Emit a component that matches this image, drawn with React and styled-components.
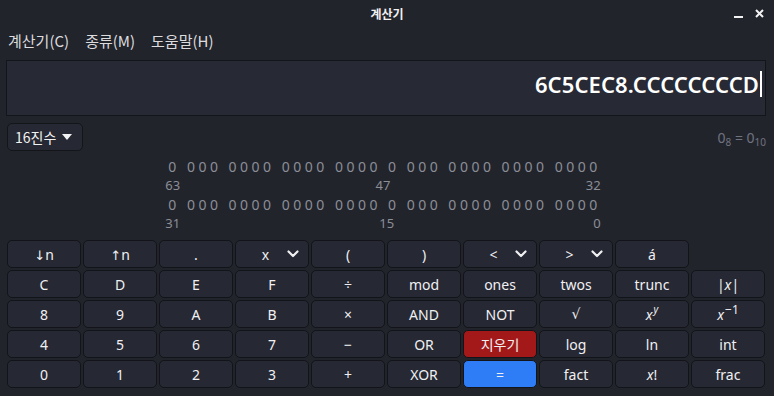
import React from 'react'
import styled, { createGlobalStyle } from 'styled-components'

const GlobalStyle = createGlobalStyle`
  html, body {
    margin: 0;
    padding: 0;
    background: #22242c;
  }
  body {
    font-family: "Noto Sans", "Noto Sans CJK KR", sans-serif;
    color: #e4e4e6;
  }
`

const Window = styled.div`
  width: 774px;
  height: 396px;
  background: #22242c;
  display: flex;
  flex-direction: column;
  overflow: hidden;
`

const TitleBar = styled.div`
  height: 27px;
  display: grid;
  grid-template-columns: 1fr auto 1fr;
  align-items: center;
`

const Title = styled.div`
  grid-column: 2;
  font-family: "Noto Sans CJK KR", sans-serif;
  font-size: 12px;
  font-weight: 700;
  color: #f0f0f0;
`

const Controls = styled.div`
  justify-self: end;
  display: flex;
  align-items: center;
  gap: 12px;
  padding-right: 10px;
`

const MenuBar = styled.div`
  height: 28px;
  display: flex;
  align-items: center;
  gap: 16px;
  padding-left: 8px;
`

const MenuItem = styled.span`
  font-family: "Noto Sans CJK KR", sans-serif;
  font-size: 15px;
  color: #dcdcdf;
  margin-top: -2px;
`

const Body = styled.div`
  padding: 5px 8px 0 6px;
  display: flex;
  flex-direction: column;
`

const Display = styled.div`
  background: #272935;
  border: 1px solid #14151a;
  display: flex;
  align-items: center;
  justify-content: flex-end;
  padding-right: 3px;
  padding-bottom: 9px;
  box-sizing: content-box;
  height: 45px;
`

const DisplayText = styled.span`
  font-size: 22px;
  font-weight: 600;
  color: #ffffff;
  letter-spacing: 0.1px;
`

const Cursor = styled.span`
  width: 2px;
  height: 26px;
  background: #ffffff;
  margin-left: 1px;
`

const BaseRow = styled.div`
  margin-top: 7px;
  margin-left: 1px;
  display: flex;
  align-items: center;
  justify-content: space-between;
`

const BaseSelect = styled.div`
  height: 26px;
  border: 1px solid #141519;
  border-radius: 5px;
  background: #262833;
  display: flex;
  align-items: center;
  gap: 6px;
  padding-left: 7px;
  box-sizing: content-box;
  font-family: "Noto Sans CJK KR", sans-serif;
  font-size: 14px;
  color: #f2f2f2;
  width: 67px;
`

const Conversion = styled.span`
  font-size: 14px;
  color: #707380;
  margin-top: 2px;
  sub {
    font-size: 10px;
    vertical-align: -3px;
  }
`

const Bits = styled.div`
  margin-top: 6px;
  margin-right: 6px;
  align-self: center;
  display: flex;
  flex-direction: column;
  color: #8b8e97;
  font-size: 14px;
  line-height: 19px;
`

const BitLine = styled.div`
  white-space: pre;
  letter-spacing: 3.5px;
  padding-left: 3px;
`

const BitLabels = styled.div`
  display: flex;
  justify-content: space-between;
  font-size: 13px;
`

const Keypad = styled.div`
  margin-top: 7px;
  margin-left: 1px;
  display: grid;
  grid-template-columns: repeat(10, 74px);
  grid-auto-rows: 28px;
  gap: 2px;
`

const Key = styled.button`
  box-sizing: border-box;
  border: 1px solid #131419;
  border-radius: 5px;
  background: ${p => (p.$tone === 'danger' ? '#a3191a' : p.$tone === 'accent' ? '#2e7cf6' : '#262833')};
  color: #f0f0f2;
  font-family: "Noto Sans", "Noto Sans CJK KR", sans-serif;
  font-size: 14px;
  display: flex;
  align-items: center;
  justify-content: center;
  padding: 0;
  i {
    font-style: italic;
  }
`

const Sup = styled.span`
  position: relative;
  top: ${p => p.$top || -5}px;
  font-size: ${p => p.$size || 10}px;
  margin-left: 1px;
`

const Arrow = styled.span`
  font-family: "DejaVu Sans", sans-serif;
  font-size: 13px;
  position: relative;
  top: 1px;
`

const Root = styled.span`
  font-family: "DejaVu Sans", sans-serif;
  font-size: 14px;
`

const KeyLabel = styled.span`
  flex: 1;
  text-align: center;
  padding-left: 8px;
`

const Chevron = () => (
  <svg width="12" height="8" viewBox="0 0 12 8" style={{ marginRight: 9 }}>
    <polyline points="1.5,1.5 6,6 10.5,1.5" fill="none" stroke="#f0f0f2" strokeWidth="2.2" strokeLinecap="round" strokeLinejoin="round" />
  </svg>
)

const MenuKey = ({ children }) => (
  <Key>
    <KeyLabel>{children}</KeyLabel>
    <Chevron />
  </Key>
)

const Spacer = styled.div``

const bits = '0 000 0000 0000 0000 0 000 0000 0000 0000'

export default function App() {
  return (
    <Window>
      <GlobalStyle />
      <TitleBar>
        <Title>계산기</Title>
        <Controls>
          <svg width="9" height="10" viewBox="0 0 9 10">
            <rect x="0" y="7" width="9" height="2" fill="#f2f2f2" />
          </svg>
          <svg width="9" height="9" viewBox="0 0 9 9">
            <path d="M1 1 L8 8 M8 1 L1 8" stroke="#f2f2f2" strokeWidth="2" />
          </svg>
        </Controls>
      </TitleBar>
      <MenuBar>
        <MenuItem>계산기(C)</MenuItem>
        <MenuItem>종류(M)</MenuItem>
        <MenuItem>도움말(H)</MenuItem>
      </MenuBar>
      <Body>
        <Display>
          <DisplayText>6C5CEC8.CCCCCCCCD</DisplayText>
          <Cursor />
        </Display>
        <BaseRow>
          <BaseSelect>
            16진수
            <svg width="10" height="6" viewBox="0 0 10 6">
              <polygon points="0,0 10,0 5,6" fill="#f2f2f2" />
            </svg>
          </BaseSelect>
          <Conversion>
            0<sub>8</sub> = 0<sub>10</sub>
          </Conversion>
        </BaseRow>
        <Bits>
          <BitLine>{bits}</BitLine>
          <BitLabels>
            <span>63</span>
            <span>47</span>
            <span>32</span>
          </BitLabels>
          <BitLine>{bits}</BitLine>
          <BitLabels>
            <span>31</span>
            <span>15</span>
            <span>0</span>
          </BitLabels>
        </Bits>
        <Keypad>
          <Key><Arrow>↓</Arrow>n</Key>
          <Key><Arrow>↑</Arrow>n</Key>
          <Key>.</Key>
          <MenuKey>x</MenuKey>
          <Key>(</Key>
          <Key>)</Key>
          <MenuKey>&lt;</MenuKey>
          <MenuKey>&gt;</MenuKey>
          <Key>á</Key>
          <Spacer />

          <Key>C</Key>
          <Key>D</Key>
          <Key>E</Key>
          <Key>F</Key>
          <Key>÷</Key>
          <Key>mod</Key>
          <Key>ones</Key>
          <Key>twos</Key>
          <Key>trunc</Key>
          <Key>|<i>x</i>|</Key>

          <Key>8</Key>
          <Key>9</Key>
          <Key>A</Key>
          <Key>B</Key>
          <Key>×</Key>
          <Key>AND</Key>
          <Key>NOT</Key>
          <Key><Root>√</Root></Key>
          <Key><i>x</i><Sup><i>y</i></Sup></Key>
          <Key><i>x</i><Sup $size={12} $top={-5}>−1</Sup></Key>

          <Key>4</Key>
          <Key>5</Key>
          <Key>6</Key>
          <Key>7</Key>
          <Key>−</Key>
          <Key>OR</Key>
          <Key $tone="danger">지우기</Key>
          <Key>log</Key>
          <Key>ln</Key>
          <Key>int</Key>

          <Key>0</Key>
          <Key>1</Key>
          <Key>2</Key>
          <Key>3</Key>
          <Key>+</Key>
          <Key>XOR</Key>
          <Key $tone="accent">=</Key>
          <Key>fact</Key>
          <Key><i>x</i>!</Key>
          <Key>frac</Key>
        </Keypad>
      </Body>
    </Window>
  )
}
